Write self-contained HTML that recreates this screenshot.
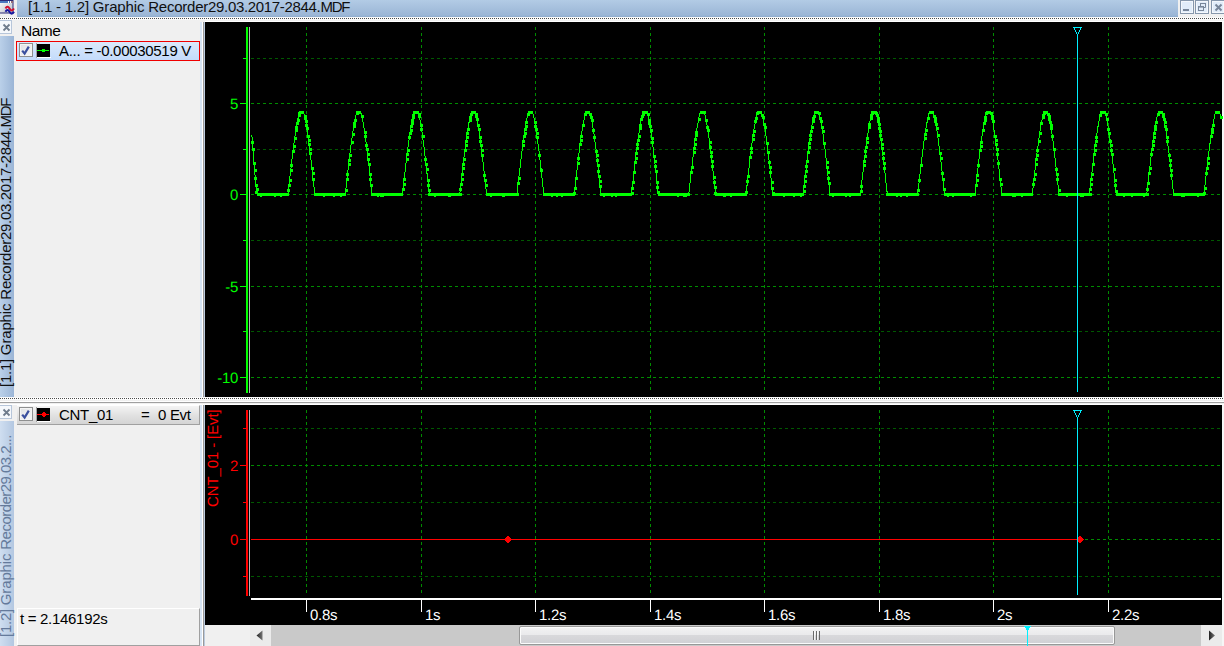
<!DOCTYPE html>
<html><head><meta charset="utf-8"><title>Graphic Recorder</title>
<style>
html,body{margin:0;padding:0}
body{width:1224px;height:646px;overflow:hidden;position:relative;background:#f0f0f0;font-family:"Liberation Sans",Arial,sans-serif;font-size:15px;color:#000}
.a{position:absolute}
.dots{height:1px;background:repeating-linear-gradient(90deg,#4a4a4a 0 1px,#fff 1px 2px)}
.vt{position:absolute;white-space:pre;transform-origin:0 0;transform:rotate(-90deg);font-size:15px;line-height:14px;height:14px}
.row{position:absolute;white-space:nowrap;letter-spacing:-0.3px;line-height:18px}
.cb{position:absolute;width:12px;height:12px;border:1px solid #8e8f8f;background:linear-gradient(135deg,#dfe1e4,#f8f8f8);box-shadow:inset 0 0 0 1px #f4f4f4}
.xb{position:absolute;left:0;width:11px;height:12px;border:1px solid #b7c6da;border-left:none;background:#f5f8fc}
</style></head><body>
<!-- title bar -->
<div class="a" style="left:17px;top:0;width:1161px;height:17px;background:linear-gradient(#b2cbe5,#9bb6d6 90%,#8fabcc)"></div>
<div class="a" style="left:28px;top:-2px;font-size:15px;line-height:18px;white-space:pre;letter-spacing:0px;color:#101010" id="title"><span style="letter-spacing:-0.23px">[1.1 - 1.2] </span><span style="letter-spacing:-0.15px">Graphic </span><span style="letter-spacing:-0.25px">Recorder</span><span style="letter-spacing:-0.32px">29.03.2017-2844.</span><span style="letter-spacing:-1.27px">MDF</span></div>
<!-- app icon -->
<svg class="a" style="left:0;top:0" width="15" height="15" viewBox="0 0 15 15">
<defs><linearGradient id="ig" x1="0" y1="0" x2="1" y2="1"><stop offset="0" stop-color="#fff"/><stop offset="1" stop-color="#b8bcc4"/></linearGradient></defs>
<rect x="-1" y="0.5" width="14" height="12.5" fill="url(#ig)" stroke="#2b2b78" stroke-width="1"/>
<rect x="0" y="1" width="13" height="2" fill="#4a78c0"/>
<rect x="8" y="1" width="1" height="2" fill="#fff"/><rect x="10" y="1" width="1" height="2" fill="#fff"/><rect x="11.5" y="1" width="1" height="2" fill="#e06030"/>
<path d="M5.500 8.500c1.300-2.500 2.600-2.500 4 0s3 2.500 4.500 0" fill="none" stroke="#d01030" stroke-width="2"/>
<path d="M5.500 11.800c1.300-2.500 2.600-2.500 4 0s3 2.500 4.500 0" fill="none" stroke="#1818a0" stroke-width="2"/>
</svg>
<!-- window buttons -->
<svg class="a" style="left:1178px;top:0" width="46" height="17" viewBox="0 0 46 17">
<g fill="#e1ecf9" stroke="#8697ac" stroke-width="1">
<rect x="2.5" y="0.5" width="13" height="13"/><rect x="17.5" y="0.5" width="13" height="13"/><rect x="33.5" y="0.5" width="13" height="13"/></g>
<g fill="none" stroke="#fff" stroke-width="1" opacity=".6"><rect x="3.5" y="1.5" width="11" height="11"/><rect x="18.5" y="1.5" width="11" height="11"/><rect x="34.5" y="1.5" width="11" height="11"/></g>
<rect x="5" y="9" width="6" height="2" fill="#78869a"/>
<g fill="none" stroke="#78869a" stroke-width="1"><path d="M22.5 6V3.5h5v4H26" /><rect x="20.5" y="6.500" width="5" height="4"/></g>
<rect x="22" y="3" width="6" height="1" fill="#78869a"/><rect x="20" y="6" width="6" height="1.6" fill="#78869a"/>
<path d="M37.500 4.500l6 6M43.500 4.500l-6 6" stroke="#78869a" stroke-width="2" fill="none"/>
</svg>
<!-- dotted separators -->
<div class="a" style="left:0;top:17px;width:1224px;height:3px;background:#fafafa"></div>
<div class="a dots" style="left:0;top:18px;width:1224px"></div>
<div class="a" style="left:0;top:397px;width:1224px;height:3px;background:#fafafa"></div>
<div class="a dots" style="left:0;top:398px;width:1224px"></div>
<div class="a" style="left:0;top:401px;width:1224px;height:1px;background:#fff"></div>
<div class="a" style="left:0;top:402px;width:1224px;height:1px;background:#a0a0a0"></div>
<div class="a" style="left:0;top:404px;width:1224px;height:1px;background:#fff"></div>
<!-- left tab strips -->
<div class="a" style="left:0;top:36px;width:14px;height:361px;background:linear-gradient(90deg,#bad0e9,#9bb5d6)"></div>
<div class="a" style="left:0;top:421px;width:14px;height:225px;background:linear-gradient(90deg,#cfdef0,#b3c7e1)"></div>
<div class="vt" id="vt1" style="left:-1px;top:387px;color:#101010"><span style="letter-spacing:-0.25px">[1.1] </span><span style="letter-spacing:-0.15px">Graphic </span><span style="letter-spacing:-0.25px">Recorder</span><span style="letter-spacing:-0.32px">29.03.2017-2844.</span><span style="letter-spacing:-1.27px">MDF</span></div>
<div class="vt" id="vt2" style="left:-1px;top:637px;color:#647a9b"><span style="letter-spacing:-0.25px">[1.2] </span><span style="letter-spacing:-0.16px">Graphic </span><span style="letter-spacing:-0.52px">Recorder</span><span style="letter-spacing:-0.56px">29.03.2...</span></div>
<div class="xb" style="top:20px"></div>
<div class="xb" style="top:405px"></div>
<svg class="a" style="left:0;top:20px" width="13" height="14" viewBox="0 0 13 14"><path d="M3.500 4.500l6 6M9.500 4.500l-6 6" stroke="#6f7c8c" stroke-width="1.8" fill="none"/></svg>
<svg class="a" style="left:0;top:405px" width="13" height="14" viewBox="0 0 13 14"><path d="M3.500 4.500l6 6M9.500 4.500l-6 6" stroke="#6f7c8c" stroke-width="1.8" fill="none"/></svg>
<!-- legend top -->
<div class="a" id="name" style="left:21px;top:21.700px;line-height:18px;font-size:15.5px;letter-spacing:-0.5px">Name</div>
<div class="a" style="left:16px;top:41px;width:182px;height:18px;border:1px solid #f00000;background:linear-gradient(#dbe9fb,#c3dbfb)"></div>
<div class="cb" style="left:19px;top:43px"></div>
<svg class="a" style="left:19px;top:43px" width="14" height="14" viewBox="0 0 14 14"><path d="M3.200 7.600L5.600 10.500L9.800 3.600" fill="none" stroke="#3a4f9e" stroke-width="2.200"/></svg>
<svg class="a" style="left:36px;top:43px" width="15" height="15" viewBox="0 0 15 15" shape-rendering="crispEdges"><rect x="0" y="0" width="1" height="15" fill="#a0a0a0"/><rect x="1" y="1" width="13" height="13" fill="#000"/><rect x="1" y="14" width="14" height="1" fill="#fff"/><rect x="1" y="7" width="12" height="1" fill="#00ff00"/><rect x="6" y="6" width="3" height="3" fill="#00ff00"/></svg>
<div class="row" id="r1" style="left:59px;top:42px">A... = -0.00030519 V</div>
<!-- legend bottom -->
<div class="a" style="left:17px;top:405px;width:182px;height:19px;border-right:1px solid #a0a0a0;border-bottom:1px solid #a0a0a0;border-top:1px solid #fff;box-sizing:border-box;width:183px;height:20px;background:linear-gradient(#f4f4f4,#e2e2e2 50%,#d4d4d4)"></div>
<div class="cb" style="left:19px;top:407px"></div>
<svg class="a" style="left:19px;top:407px" width="14" height="14" viewBox="0 0 14 14"><path d="M3.200 7.600L5.600 10.500L9.800 3.600" fill="none" stroke="#3a4f9e" stroke-width="2.200"/></svg>
<svg class="a" style="left:36px;top:407px" width="15" height="15" viewBox="0 0 15 15" shape-rendering="crispEdges"><rect x="0" y="0" width="1" height="15" fill="#a0a0a0"/><rect x="1" y="1" width="13" height="13" fill="#000"/><rect x="1" y="14" width="14" height="1" fill="#fff"/><rect x="1" y="7" width="12" height="1" fill="#ff0000"/><path d="M7 5h2v1h1v1h1v1h-1v1h-1v1h-2v-1h-1v-1h-1v-1h1v-1h1z" fill="#ff0000"/></svg>
<div class="row" id="r2a" style="left:59px;top:406px">CNT_01</div>
<div class="row" id="r2b" style="left:141px;top:406px">=</div>
<div class="row" id="r2c" style="left:158px;top:406px">0 Evt</div>
<!-- time box -->
<div class="a" style="left:17px;top:608px;width:183px;height:38px;box-sizing:border-box;border-top:1px solid #fff;border-left:1px solid #fff;border-right:1px solid #a0a0a0;border-bottom:1px solid #a0a0a0"></div>
<div class="row" id="tb" style="left:20px;top:610px">t = 2.146192s</div>
<!-- vertical splitter -->
<div class="a" style="left:200px;top:22px;width:5px;height:375px;background:linear-gradient(90deg,#d6e4f4 0 2px,#fff 2px 3px,#9a9a9a 3px 4px,#bccbde 4px 5px)"></div>
<div class="a" style="left:200px;top:405px;width:5px;height:241px;background:linear-gradient(90deg,#d6e4f4 0 2px,#fff 2px 3px,#9a9a9a 3px 4px,#bccbde 4px 5px)"></div>
<div class="a" style="left:205px;top:21px;width:1019px;height:1px;background:#fff"></div>
<div class="a" style="left:1222px;top:22px;width:2px;height:375px;background:#f6f6f6"></div>
<div class="a" style="left:1222px;top:405px;width:2px;height:241px;background:#f6f6f6"></div>
<svg width="1224" height="646" viewBox="0 0 1224 646" style="position:absolute;left:0;top:0" shape-rendering="crispEdges">
<rect x="205" y="22" width="1017" height="375" fill="#000"/>
<rect x="205" y="405" width="1017" height="220" fill="#000"/>
<g stroke="#008c00" stroke-width="1" stroke-dasharray="3 3" fill="none">
<line x1="306.5" y1="27" x2="306.5" y2="393"/>
<line x1="306.5" y1="410" x2="306.5" y2="596"/>
<line x1="421.5" y1="27" x2="421.5" y2="393"/>
<line x1="421.5" y1="410" x2="421.5" y2="596"/>
<line x1="535.5" y1="27" x2="535.5" y2="393"/>
<line x1="535.5" y1="410" x2="535.5" y2="596"/>
<line x1="650.5" y1="27" x2="650.5" y2="393"/>
<line x1="650.5" y1="410" x2="650.5" y2="596"/>
<line x1="764.5" y1="27" x2="764.5" y2="393"/>
<line x1="764.5" y1="410" x2="764.5" y2="596"/>
<line x1="879.5" y1="27" x2="879.5" y2="393"/>
<line x1="879.5" y1="410" x2="879.5" y2="596"/>
<line x1="993.5" y1="27" x2="993.5" y2="393"/>
<line x1="993.5" y1="410" x2="993.5" y2="596"/>
<line x1="1108.5" y1="27" x2="1108.5" y2="393"/>
<line x1="1108.5" y1="410" x2="1108.5" y2="596"/>
<line x1="251" y1="103.5" x2="1221" y2="103.5"/>
<line x1="251" y1="194.5" x2="1221" y2="194.5"/>
<line x1="251" y1="286.5" x2="1221" y2="286.5"/>
<line x1="251" y1="377.5" x2="1221" y2="377.5"/>
<line x1="251" y1="465.5" x2="1221" y2="465.5"/>
<line x1="251" y1="539.5" x2="1221" y2="539.5"/>
</g>
<g stroke="#005800" stroke-width="1" stroke-dasharray="3 3" fill="none">
<line x1="251" y1="58.5" x2="1221" y2="58.5"/>
<line x1="251" y1="149.5" x2="1221" y2="149.5"/>
<line x1="251" y1="240.5" x2="1221" y2="240.5"/>
<line x1="251" y1="331.5" x2="1221" y2="331.5"/>
<line x1="251" y1="428.5" x2="1221" y2="428.5"/>
<line x1="251" y1="502.5" x2="1221" y2="502.5"/>
<line x1="251" y1="576.5" x2="1221" y2="576.5"/>
</g>
<rect x="246" y="27" width="2" height="366" fill="#00ff00"/>
<rect x="249" y="27" width="1" height="366" fill="#b4b4b4"/>
<rect x="240" y="103" width="6" height="1" fill="#00ff00"/>
<rect x="240" y="194" width="6" height="1" fill="#00ff00"/>
<rect x="240" y="286" width="6" height="1" fill="#00ff00"/>
<rect x="240" y="377" width="6" height="1" fill="#00ff00"/>
<rect x="243" y="58" width="3" height="1" fill="#00ff00"/>
<rect x="243" y="149" width="3" height="1" fill="#00ff00"/>
<rect x="243" y="240" width="3" height="1" fill="#00ff00"/>
<rect x="243" y="331" width="3" height="1" fill="#00ff00"/>
<rect x="246" y="410" width="2" height="186" fill="#ff0000"/>
<rect x="249" y="410" width="1" height="186" fill="#b4b4b4"/>
<rect x="240" y="465" width="6" height="1" fill="#ff0000"/>
<rect x="240" y="539" width="6" height="1" fill="#ff0000"/>
<rect x="243" y="428" width="3" height="1" fill="#ff0000"/>
<rect x="243" y="502" width="3" height="1" fill="#ff0000"/>
<rect x="243" y="576" width="3" height="1" fill="#ff0000"/>
<g font-family="'Liberation Sans',Arial,sans-serif" font-size="15" letter-spacing="-0.3" text-rendering="geometricPrecision">
<g fill="#00ff00" text-anchor="end">
<text x="238" y="108.6">5</text>
<text x="238" y="199.6">0</text>
<text x="238" y="291.6">-5</text>
<text x="238" y="382.6">-10</text>
</g>
<g fill="#ff0000" text-anchor="end">
<text x="238" y="470.6">2</text>
<text x="238" y="544.6">0</text>
</g>
<text fill="#ff0000" letter-spacing="-0.12" transform="translate(218 507) rotate(-90)">CNT_01 - [Evt]</text>
<rect x="251" y="598" width="970" height="2" fill="#fff"/>
<rect x="306" y="600" width="1" height="12" fill="#fff"/>
<text fill="#fff" x="310" y="620">0.8s</text>
<rect x="421" y="600" width="1" height="12" fill="#fff"/>
<text fill="#fff" x="425" y="620">1s</text>
<rect x="535" y="600" width="1" height="12" fill="#fff"/>
<text fill="#fff" x="539" y="620">1.2s</text>
<rect x="650" y="600" width="1" height="12" fill="#fff"/>
<text fill="#fff" x="654" y="620">1.4s</text>
<rect x="764" y="600" width="1" height="12" fill="#fff"/>
<text fill="#fff" x="768" y="620">1.6s</text>
<rect x="879" y="600" width="1" height="12" fill="#fff"/>
<text fill="#fff" x="883" y="620">1.8s</text>
<rect x="993" y="600" width="1" height="12" fill="#fff"/>
<text fill="#fff" x="997" y="620">2s</text>
<rect x="1108" y="600" width="1" height="12" fill="#fff"/>
<text fill="#fff" x="1112" y="620">2.2s</text>
</g>
<path d="M251.8 134.8 L252.4 141.9 L252.9 149.0 L253.5 156.2 L254.1 163.3 L254.7 170.4 L255.2 177.6 L255.8 184.7 L256.4 191.8 L257.0 188.9 L257.5 194.3 L258.1 194.5 L258.7 194.5 L259.2 194.5 L259.8 194.5 L260.4 194.5 L261.0 194.5 L261.5 194.5 L262.1 194.5 L262.7 194.5 L263.3 194.5 L263.8 194.5 L264.4 194.5 L265.0 194.5 L265.6 194.5 L266.1 194.5 L266.7 194.5 L267.3 194.5 L267.8 194.5 L268.4 194.5 L269.0 194.5 L269.6 194.5 L270.1 194.5 L270.7 194.5 L271.3 194.5 L271.9 194.5 L272.4 194.5 L273.0 194.5 L273.6 194.5 L274.1 194.5 L274.7 194.5 L275.3 194.5 L275.9 194.5 L276.4 194.5 L277.0 194.5 L277.6 194.5 L278.2 194.5 L278.7 194.5 L279.3 194.5 L279.9 194.5 L280.4 194.5 L281.0 194.5 L281.6 194.5 L282.2 194.5 L282.7 194.5 L283.3 194.5 L283.9 194.5 L284.5 194.5 L285.0 194.5 L285.6 194.5 L286.2 194.5 L286.8 194.5 L287.3 194.5 L287.9 194.5 L288.5 190.2 L289.0 185.1 L289.6 179.9 L290.2 174.8 L290.8 169.8 L291.3 164.9 L291.9 160.0 L292.5 155.3 L293.1 150.7 L293.6 146.2 L294.2 142.0 L294.8 137.9 L295.3 133.9 L295.9 130.2 L296.5 126.7 L297.1 123.4 L297.6 120.4 L298.2 117.6 L298.8 115.1 L299.4 112.8 L299.9 112.3 L300.5 112.3 L301.1 112.3 L301.7 112.3 L302.2 112.3 L302.8 112.3 L303.4 112.3 L303.9 113.2 L304.5 115.7 L305.1 118.3 L305.7 121.3 L306.2 124.5 L306.8 128.0 L307.4 131.7 L308.0 135.7 L308.5 139.8 L309.1 144.2 L309.7 148.7 L310.2 153.4 L310.8 158.2 L311.4 163.2 L312.0 168.3 L312.5 173.5 L313.1 178.7 L313.7 184.1 L314.3 189.4 L314.8 194.5 L315.4 194.5 L316.0 194.5 L316.5 194.5 L317.1 194.5 L317.7 194.5 L318.3 194.5 L318.8 194.5 L319.4 194.5 L320.0 194.5 L320.6 194.5 L321.1 194.5 L321.7 194.5 L322.3 194.5 L322.9 194.5 L323.4 194.5 L324.0 194.5 L324.6 194.5 L325.1 194.5 L325.7 194.5 L326.3 194.5 L326.9 194.5 L327.4 194.5 L328.0 194.5 L328.6 194.5 L329.2 194.5 L329.7 194.5 L330.3 194.5 L330.9 194.5 L331.4 194.5 L332.0 194.5 L332.6 194.5 L333.2 194.5 L333.7 194.5 L334.3 194.5 L334.9 194.5 L335.5 194.5 L336.0 194.5 L336.6 194.5 L337.2 194.5 L337.7 194.5 L338.3 194.5 L338.9 194.5 L339.5 194.5 L340.0 194.5 L340.6 194.5 L341.2 194.5 L341.8 194.5 L342.3 194.5 L342.9 194.5 L343.5 194.5 L344.1 194.5 L344.6 194.5 L345.2 194.5 L345.8 189.8 L346.3 184.6 L346.9 179.5 L347.5 174.4 L348.1 169.4 L348.6 164.4 L349.2 159.6 L349.8 154.9 L350.4 150.3 L350.9 145.9 L351.5 141.6 L352.1 137.5 L352.6 133.6 L353.2 129.9 L353.8 126.4 L354.4 123.2 L354.9 120.2 L355.5 117.4 L356.1 114.9 L356.7 112.6 L357.2 112.3 L357.8 112.3 L358.4 112.3 L359.0 112.3 L359.5 112.3 L360.1 112.3 L360.7 112.3 L361.2 113.4 L361.8 115.9 L362.4 118.6 L363.0 121.6 L363.5 124.8 L364.1 128.3 L364.7 132.0 L365.3 136.0 L365.8 140.2 L366.4 144.5 L367.0 149.1 L367.5 153.8 L368.1 158.7 L368.7 163.6 L369.3 168.7 L369.8 173.9 L370.4 179.2 L371.0 184.5 L371.6 189.9 L372.1 194.5 L372.7 194.5 L373.3 194.5 L373.8 194.5 L374.4 194.5 L375.0 194.5 L375.6 194.5 L376.1 194.5 L376.7 194.5 L377.3 194.5 L377.9 194.5 L378.4 194.5 L379.0 194.5 L379.6 194.5 L380.2 194.5 L380.7 194.5 L381.3 194.5 L381.9 194.5 L382.4 194.5 L383.0 194.5 L383.6 194.5 L384.2 194.5 L384.7 194.5 L385.3 194.5 L385.9 194.5 L386.5 194.5 L387.0 194.5 L387.6 194.5 L388.2 194.5 L388.7 194.5 L389.3 194.5 L389.9 194.5 L390.5 194.5 L391.0 194.5 L391.6 194.5 L392.2 194.5 L392.8 194.5 L393.3 194.5 L393.9 194.5 L394.5 194.5 L395.0 194.5 L395.6 194.5 L396.2 194.5 L396.8 194.5 L397.3 194.5 L397.9 194.5 L398.5 194.5 L399.1 194.5 L399.6 194.5 L400.2 194.5 L400.8 194.5 L401.4 194.5 L401.9 194.5 L402.5 194.5 L403.1 189.3 L403.6 184.2 L404.2 179.0 L404.8 173.9 L405.4 168.9 L405.9 164.0 L406.5 159.2 L407.1 154.5 L407.7 149.9 L408.2 145.5 L408.8 141.2 L409.4 137.2 L409.9 133.3 L410.5 129.6 L411.1 126.1 L411.7 122.9 L412.2 119.9 L412.8 117.2 L413.4 114.7 L414.0 112.5 L414.5 112.3 L415.1 112.3 L415.7 112.3 L416.3 112.3 L416.8 112.3 L417.4 112.3 L418.0 112.3 L418.5 113.6 L419.1 116.1 L419.7 118.8 L420.3 121.8 L420.8 125.1 L421.4 128.6 L422.0 132.4 L422.6 136.4 L423.1 140.6 L423.7 144.9 L424.3 149.5 L424.8 154.2 L425.4 159.1 L426.0 164.1 L426.6 169.2 L427.1 174.4 L427.7 179.7 L428.3 185.0 L428.9 190.3 L429.4 194.5 L430.0 194.5 L430.6 194.5 L431.1 194.5 L431.7 194.5 L432.3 194.5 L432.9 194.5 L433.4 194.5 L434.0 194.5 L434.6 194.5 L435.2 194.5 L435.7 194.5 L436.3 194.5 L436.9 194.5 L437.5 194.5 L438.0 194.5 L438.6 194.5 L439.2 194.5 L439.7 194.5 L440.3 194.5 L440.9 194.5 L441.5 194.5 L442.0 194.5 L442.6 194.5 L443.2 194.5 L443.8 194.5 L444.3 194.5 L444.9 194.5 L445.5 194.5 L446.0 194.5 L446.6 194.5 L447.2 194.5 L447.8 194.5 L448.3 194.5 L448.9 194.5 L449.5 194.5 L450.1 194.5 L450.6 194.5 L451.2 194.5 L451.8 194.5 L452.3 194.5 L452.9 194.5 L453.5 194.5 L454.1 194.5 L454.6 194.5 L455.2 194.5 L455.8 194.5 L456.4 194.5 L456.9 194.5 L457.5 194.5 L458.1 194.5 L458.7 194.5 L459.2 194.5 L459.8 194.1 L460.4 188.9 L460.9 183.7 L461.5 178.6 L462.1 173.5 L462.7 168.5 L463.2 163.6 L463.8 158.8 L464.4 154.1 L465.0 149.5 L465.5 145.1 L466.1 140.9 L466.7 136.8 L467.2 132.9 L467.8 129.3 L468.4 125.8 L469.0 122.6 L469.5 119.7 L470.1 116.9 L470.7 114.5 L471.3 112.3 L471.8 112.3 L472.4 112.3 L473.0 112.3 L473.6 112.3 L474.1 112.3 L474.7 112.3 L475.3 112.3 L475.8 113.8 L476.4 116.3 L477.0 119.1 L477.6 122.1 L478.1 125.4 L478.7 128.9 L479.3 132.7 L479.9 136.7 L480.4 140.9 L481.0 145.3 L481.6 149.9 L482.1 154.6 L482.7 159.5 L483.3 164.5 L483.9 169.6 L484.4 174.9 L485.0 180.1 L485.6 185.5 L486.2 190.8 L486.7 194.5 L487.3 194.5 L487.9 194.5 L488.4 194.5 L489.0 194.5 L489.6 194.5 L490.2 194.5 L490.7 194.5 L491.3 194.5 L491.9 194.5 L492.5 194.5 L493.0 194.5 L493.6 194.5 L494.2 194.5 L494.8 194.5 L495.3 194.5 L495.9 194.5 L496.5 194.5 L497.0 194.5 L497.6 194.5 L498.2 194.5 L498.8 194.5 L499.3 194.5 L499.9 194.5 L500.5 194.5 L501.1 194.5 L501.6 194.5 L502.2 194.5 L502.8 194.5 L503.3 194.5 L503.9 194.5 L504.5 194.5 L505.1 194.5 L505.6 194.5 L506.2 194.5 L506.8 194.5 L507.4 194.5 L507.9 194.5 L508.5 194.5 L509.1 194.5 L509.6 194.5 L510.2 194.5 L510.8 194.5 L511.4 194.5 L511.9 194.5 L512.5 194.5 L513.1 194.5 L513.7 194.5 L514.2 194.5 L514.8 194.5 L515.4 194.5 L516.0 194.5 L516.5 194.5 L517.1 193.6 L517.7 188.4 L518.2 183.3 L518.8 178.1 L519.4 173.1 L520.0 168.1 L520.5 163.2 L521.1 158.4 L521.7 153.7 L522.3 149.1 L522.8 144.7 L523.4 140.5 L524.0 136.5 L524.5 132.6 L525.1 129.0 L525.7 125.5 L526.3 122.4 L526.8 119.4 L527.4 116.7 L528.0 114.3 L528.6 112.3 L529.1 112.3 L529.7 112.3 L530.3 112.3 L530.9 112.3 L531.4 112.3 L532.0 112.3 L532.6 112.3 L533.1 114.1 L533.7 116.6 L534.3 119.3 L534.9 122.4 L535.4 125.7 L536.0 129.3 L536.6 133.1 L537.2 137.1 L537.7 141.3 L538.3 145.7 L538.9 150.3 L539.4 155.1 L540.0 160.0 L540.6 165.0 L541.2 170.1 L541.7 175.3 L542.3 180.6 L542.9 185.9 L543.5 191.3 L544.0 194.5 L544.6 194.5 L545.2 194.5 L545.7 194.5 L546.3 194.5 L546.9 194.5 L547.5 194.5 L548.0 194.5 L548.6 194.5 L549.2 194.5 L549.8 194.5 L550.3 194.5 L550.9 194.5 L551.5 194.5 L552.1 194.5 L552.6 194.5 L553.2 194.5 L553.8 194.5 L554.3 194.5 L554.9 194.5 L555.5 194.5 L556.1 194.5 L556.6 194.5 L557.2 194.5 L557.8 194.5 L558.4 194.5 L558.9 194.5 L559.5 194.5 L560.1 194.5 L560.6 194.5 L561.2 194.5 L561.8 194.5 L562.4 194.5 L562.9 194.5 L563.5 194.5 L564.1 194.5 L564.7 194.5 L565.2 194.5 L565.8 194.5 L566.4 194.5 L566.9 194.5 L567.5 194.5 L568.1 194.5 L568.7 194.5 L569.2 194.5 L569.8 194.5 L570.4 194.5 L571.0 194.5 L571.5 194.5 L572.1 194.5 L572.7 194.5 L573.3 194.5 L573.8 194.5 L574.4 193.2 L575.0 188.0 L575.5 182.8 L576.1 177.7 L576.7 172.6 L577.3 167.6 L577.8 162.7 L578.4 157.9 L579.0 153.3 L579.6 148.7 L580.1 144.4 L580.7 140.1 L581.3 136.1 L581.8 132.3 L582.4 128.7 L583.0 125.3 L583.6 122.1 L584.1 119.2 L584.7 116.5 L585.3 114.1 L585.9 112.3 L586.4 112.3 L587.0 112.3 L587.6 112.3 L588.2 112.3 L588.7 112.3 L589.3 112.3 L589.9 112.3 L590.4 114.3 L591.0 116.8 L591.6 119.6 L592.2 122.7 L592.7 126.0 L593.3 129.6 L593.9 133.4 L594.5 137.4 L595.0 141.7 L595.6 146.1 L596.2 150.7 L596.7 155.5 L597.3 160.4 L597.9 165.4 L598.5 170.5 L599.0 175.8 L599.6 181.1 L600.2 186.4 L600.8 191.8 L601.3 194.5 L601.9 194.5 L602.5 194.5 L603.0 194.5 L603.6 194.5 L604.2 194.5 L604.8 194.5 L605.3 194.5 L605.9 194.5 L606.5 194.5 L607.1 194.5 L607.6 194.5 L608.2 194.5 L608.8 194.5 L609.4 194.5 L609.9 194.5 L610.5 194.5 L611.1 194.5 L611.6 194.5 L612.2 194.5 L612.8 194.5 L613.4 194.5 L613.9 194.5 L614.5 194.5 L615.1 194.5 L615.7 194.5 L616.2 194.5 L616.8 194.5 L617.4 194.5 L617.9 194.5 L618.5 194.5 L619.1 194.5 L619.7 194.5 L620.2 194.5 L620.8 194.5 L621.4 194.5 L622.0 194.5 L622.5 194.5 L623.1 194.5 L623.7 194.5 L624.2 194.5 L624.8 194.5 L625.4 194.5 L626.0 194.5 L626.5 194.5 L627.1 194.5 L627.7 194.5 L628.3 194.5 L628.8 194.5 L629.4 194.5 L630.0 194.5 L630.6 194.5 L631.1 194.5 L631.7 192.7 L632.3 187.5 L632.8 182.4 L633.4 177.2 L634.0 172.2 L634.6 167.2 L635.1 162.3 L635.7 157.5 L636.3 152.9 L636.9 148.3 L637.4 144.0 L638.0 139.8 L638.6 135.8 L639.1 132.0 L639.7 128.4 L640.3 125.0 L640.9 121.8 L641.4 118.9 L642.0 116.3 L642.6 113.9 L643.2 112.3 L643.7 112.3 L644.3 112.3 L644.9 112.3 L645.5 112.3 L646.0 112.3 L646.6 112.3 L647.2 112.3 L647.7 114.5 L648.3 117.0 L648.9 119.9 L649.5 123.0 L650.0 126.3 L650.6 129.9 L651.2 133.7 L651.8 137.8 L652.3 142.1 L652.9 146.5 L653.5 151.1 L654.0 155.9 L654.6 160.8 L655.2 165.9 L655.8 171.0 L656.3 176.2 L656.9 181.5 L657.5 186.9 L658.1 192.2 L658.6 194.5 L659.2 194.5 L659.8 194.5 L660.3 194.5 L660.9 194.5 L661.5 194.5 L662.1 194.5 L662.6 194.5 L663.2 194.5 L663.8 194.5 L664.4 194.5 L664.9 194.5 L665.5 194.5 L666.1 194.5 L666.7 194.5 L667.2 194.5 L667.8 194.5 L668.4 194.5 L668.9 194.5 L669.5 194.5 L670.1 194.5 L670.7 194.5 L671.2 194.5 L671.8 194.5 L672.4 194.5 L673.0 194.5 L673.5 194.5 L674.1 194.5 L674.7 194.5 L675.2 194.5 L675.8 194.5 L676.4 194.5 L677.0 194.5 L677.5 194.5 L678.1 194.5 L678.7 194.5 L679.3 194.5 L679.8 194.5 L680.4 194.5 L681.0 194.5 L681.5 194.5 L682.1 194.5 L682.7 194.5 L683.3 194.5 L683.8 194.5 L684.4 194.5 L685.0 194.5 L685.6 194.5 L686.1 194.5 L686.7 194.5 L687.3 194.5 L687.9 194.5 L688.4 194.5 L689.0 192.2 L689.6 187.1 L690.1 181.9 L690.7 176.8 L691.3 171.7 L691.9 166.8 L692.4 161.9 L693.0 157.1 L693.6 152.5 L694.2 148.0 L694.7 143.6 L695.3 139.4 L695.9 135.4 L696.4 131.6 L697.0 128.0 L697.6 124.7 L698.2 121.6 L698.7 118.7 L699.3 116.0 L699.9 113.7 L700.5 112.3 L701.0 112.3 L701.6 112.3 L702.2 112.3 L702.8 112.3 L703.3 112.3 L703.9 112.3 L704.5 112.4 L705.0 114.7 L705.6 117.3 L706.2 120.1 L706.8 123.2 L707.3 126.6 L707.9 130.2 L708.5 134.1 L709.1 138.2 L709.6 142.4 L710.2 146.9 L710.8 151.5 L711.3 156.3 L711.9 161.3 L712.5 166.3 L713.1 171.5 L713.6 176.7 L714.2 182.0 L714.8 187.3 L715.4 192.7 L715.9 194.5 L716.5 194.5 L717.1 194.5 L717.6 194.5 L718.2 194.5 L718.8 194.5 L719.4 194.5 L719.9 194.5 L720.5 194.5 L721.1 194.5 L721.7 194.5 L722.2 194.5 L722.8 194.5 L723.4 194.5 L724.0 194.5 L724.5 194.5 L725.1 194.5 L725.7 194.5 L726.2 194.5 L726.8 194.5 L727.4 194.5 L728.0 194.5 L728.5 194.5 L729.1 194.5 L729.7 194.5 L730.3 194.5 L730.8 194.5 L731.4 194.5 L732.0 194.5 L732.5 194.5 L733.1 194.5 L733.7 194.5 L734.3 194.5 L734.8 194.5 L735.4 194.5 L736.0 194.5 L736.6 194.5 L737.1 194.5 L737.7 194.5 L738.3 194.5 L738.8 194.5 L739.4 194.5 L740.0 194.5 L740.6 194.5 L741.1 194.5 L741.7 194.5 L742.3 194.5 L742.9 194.5 L743.4 194.5 L744.0 194.5 L744.6 194.5 L745.2 194.5 L745.7 194.5 L746.3 191.8 L746.9 186.6 L747.4 181.5 L748.0 176.4 L748.6 171.3 L749.2 166.3 L749.7 161.5 L750.3 156.7 L750.9 152.1 L751.5 147.6 L752.0 143.2 L752.6 139.1 L753.2 135.1 L753.7 131.3 L754.3 127.7 L754.9 124.4 L755.5 121.3 L756.0 118.4 L756.6 115.8 L757.2 113.5 L757.8 112.3 L758.3 112.3 L758.9 112.3 L759.5 112.3 L760.1 112.3 L760.6 112.3 L761.2 112.3 L761.8 112.6 L762.3 114.9 L762.9 117.5 L763.5 120.4 L764.1 123.5 L764.6 126.9 L765.2 130.6 L765.8 134.4 L766.4 138.5 L766.9 142.8 L767.5 147.3 L768.1 152.0 L768.6 156.8 L769.2 161.7 L769.8 166.8 L770.4 171.9 L770.9 177.1 L771.5 182.4 L772.1 187.8 L772.7 193.2 L773.2 194.5 L773.8 194.5 L774.4 194.5 L774.9 194.5 L775.5 194.5 L776.1 194.5 L776.7 194.5 L777.2 194.5 L777.8 194.5 L778.4 194.5 L779.0 194.5 L779.5 194.5 L780.1 194.5 L780.7 194.5 L781.3 194.5 L781.8 194.5 L782.4 194.5 L783.0 194.5 L783.5 194.5 L784.1 194.5 L784.7 194.5 L785.3 194.5 L785.8 194.5 L786.4 194.5 L787.0 194.5 L787.6 194.5 L788.1 194.5 L788.7 194.5 L789.3 194.5 L789.8 194.5 L790.4 194.5 L791.0 194.5 L791.6 194.5 L792.1 194.5 L792.7 194.5 L793.3 194.5 L793.9 194.5 L794.4 194.5 L795.0 194.5 L795.6 194.5 L796.1 194.5 L796.7 194.5 L797.3 194.5 L797.9 194.5 L798.4 194.5 L799.0 194.5 L799.6 194.5 L800.2 194.5 L800.7 194.5 L801.3 194.5 L801.9 194.5 L802.5 194.5 L803.0 194.5 L803.6 191.3 L804.2 186.2 L804.7 181.0 L805.3 175.9 L805.9 170.9 L806.5 165.9 L807.0 161.0 L807.6 156.3 L808.2 151.7 L808.8 147.2 L809.3 142.9 L809.9 138.7 L810.5 134.8 L811.0 131.0 L811.6 127.4 L812.2 124.1 L812.8 121.0 L813.3 118.2 L813.9 115.6 L814.5 113.3 L815.1 112.3 L815.6 112.3 L816.2 112.3 L816.8 112.3 L817.4 112.3 L817.9 112.3 L818.5 112.3 L819.1 112.8 L819.6 115.1 L820.2 117.7 L820.8 120.6 L821.4 123.8 L821.9 127.2 L822.5 130.9 L823.1 134.8 L823.7 138.9 L824.2 143.2 L824.8 147.7 L825.4 152.4 L825.9 157.2 L826.5 162.1 L827.1 167.2 L827.7 172.4 L828.2 177.6 L828.8 182.9 L829.4 188.3 L830.0 193.6 L830.5 194.5 L831.1 194.5 L831.7 194.5 L832.2 194.5 L832.8 194.5 L833.4 194.5 L834.0 194.5 L834.5 194.5 L835.1 194.5 L835.7 194.5 L836.3 194.5 L836.8 194.5 L837.4 194.5 L838.0 194.5 L838.6 194.5 L839.1 194.5 L839.7 194.5 L840.3 194.5 L840.8 194.5 L841.4 194.5 L842.0 194.5 L842.6 194.5 L843.1 194.5 L843.7 194.5 L844.3 194.5 L844.9 194.5 L845.4 194.5 L846.0 194.5 L846.6 194.5 L847.1 194.5 L847.7 194.5 L848.3 194.5 L848.9 194.5 L849.4 194.5 L850.0 194.5 L850.6 194.5 L851.2 194.5 L851.7 194.5 L852.3 194.5 L852.9 194.5 L853.4 194.5 L854.0 194.5 L854.6 194.5 L855.2 194.5 L855.7 194.5 L856.3 194.5 L856.9 194.5 L857.5 194.5 L858.0 194.5 L858.6 194.5 L859.2 194.5 L859.8 194.5 L860.3 194.5 L860.9 190.9 L861.5 185.7 L862.0 180.6 L862.6 175.5 L863.2 170.4 L863.8 165.5 L864.3 160.6 L864.9 155.9 L865.5 151.3 L866.1 146.8 L866.6 142.5 L867.2 138.4 L867.8 134.4 L868.3 130.7 L868.9 127.1 L869.5 123.8 L870.1 120.8 L870.6 118.0 L871.2 115.4 L871.8 113.1 L872.4 112.3 L872.9 112.3 L873.5 112.3 L874.1 112.3 L874.7 112.3 L875.2 112.3 L875.8 112.3 L876.4 113.0 L876.9 115.3 L877.5 118.0 L878.1 120.9 L878.7 124.1 L879.2 127.5 L879.8 131.2 L880.4 135.1 L881.0 139.3 L881.5 143.6 L882.1 148.1 L882.7 152.8 L883.2 157.6 L883.8 162.6 L884.4 167.6 L885.0 172.8 L885.5 178.1 L886.1 183.4 L886.7 188.7 L887.3 194.1 L887.8 194.5 L888.4 194.5 L889.0 194.5 L889.5 194.5 L890.1 194.5 L890.7 194.5 L891.3 194.5 L891.8 194.5 L892.4 194.5 L893.0 194.5 L893.6 194.5 L894.1 194.5 L894.7 194.5 L895.3 194.5 L895.9 194.5 L896.4 194.5 L897.0 194.5 L897.6 194.5 L898.1 194.5 L898.7 194.5 L899.3 194.5 L899.9 194.5 L900.4 194.5 L901.0 194.5 L901.6 194.5 L902.2 194.5 L902.7 194.5 L903.3 194.5 L903.9 194.5 L904.4 194.5 L905.0 194.5 L905.6 194.5 L906.2 194.5 L906.7 194.5 L907.3 194.5 L907.9 194.5 L908.5 194.5 L909.0 194.5 L909.6 194.5 L910.2 194.5 L910.7 194.5 L911.3 194.5 L911.9 194.5 L912.5 194.5 L913.0 194.5 L913.6 194.5 L914.2 194.5 L914.8 194.5 L915.3 194.5 L915.9 194.5 L916.5 194.5 L917.1 194.5 L917.6 194.5 L918.2 190.4 L918.8 185.3 L919.3 180.1 L919.9 175.0 L920.5 170.0 L921.1 165.1 L921.6 160.2 L922.2 155.5 L922.8 150.9 L923.4 146.4 L923.9 142.1 L924.5 138.0 L925.1 134.1 L925.6 130.4 L926.2 126.9 L926.8 123.6 L927.4 120.5 L927.9 117.7 L928.5 115.2 L929.1 112.9 L929.7 112.3 L930.2 112.3 L930.8 112.3 L931.4 112.3 L932.0 112.3 L932.5 112.3 L933.1 112.3 L933.7 113.2 L934.2 115.5 L934.8 118.2 L935.4 121.2 L936.0 124.4 L936.5 127.9 L937.1 131.6 L937.7 135.5 L938.3 139.6 L938.8 144.0 L939.4 148.5 L940.0 153.2 L940.5 158.0 L941.1 163.0 L941.7 168.1 L942.3 173.3 L942.8 178.5 L943.4 183.8 L944.0 189.2 L944.6 194.5 L945.1 194.5 L945.7 194.5 L946.3 194.5 L946.8 194.5 L947.4 194.5 L948.0 194.5 L948.6 194.5 L949.1 194.5 L949.7 194.5 L950.3 194.5 L950.9 194.5 L951.4 194.5 L952.0 194.5 L952.6 194.5 L953.2 194.5 L953.7 194.5 L954.3 194.5 L954.9 194.5 L955.4 194.5 L956.0 194.5 L956.6 194.5 L957.2 194.5 L957.7 194.5 L958.3 194.5 L958.9 194.5 L959.5 194.5 L960.0 194.5 L960.6 194.5 L961.2 194.5 L961.7 194.5 L962.3 194.5 L962.9 194.5 L963.5 194.5 L964.0 194.5 L964.6 194.5 L965.2 194.5 L965.8 194.5 L966.3 194.5 L966.9 194.5 L967.5 194.5 L968.0 194.5 L968.6 194.5 L969.2 194.5 L969.8 194.5 L970.3 194.5 L970.9 194.5 L971.5 194.5 L972.1 194.5 L972.6 194.5 L973.2 194.5 L973.8 194.5 L974.4 194.5 L974.9 194.5 L975.5 190.0 L976.1 184.8 L976.6 179.7 L977.2 174.6 L977.8 169.6 L978.4 164.6 L978.9 159.8 L979.5 155.1 L980.1 150.5 L980.7 146.0 L981.2 141.8 L981.8 137.7 L982.4 133.8 L982.9 130.0 L983.5 126.6 L984.1 123.3 L984.7 120.3 L985.2 117.5 L985.8 115.0 L986.4 112.7 L987.0 112.3 L987.5 112.3 L988.1 112.3 L988.7 112.3 L989.3 112.3 L989.8 112.3 L990.4 112.3 L991.0 113.4 L991.5 115.8 L992.1 118.5 L992.7 121.4 L993.3 124.7 L993.8 128.2 L994.4 131.9 L995.0 135.8 L995.6 140.0 L996.1 144.4 L996.7 148.9 L997.3 153.6 L997.8 158.5 L998.4 163.4 L999.0 168.5 L999.6 173.7 L1000.1 179.0 L1000.7 184.3 L1001.3 189.7 L1001.9 194.5 L1002.4 194.5 L1003.0 194.5 L1003.6 194.5 L1004.1 194.5 L1004.7 194.5 L1005.3 194.5 L1005.9 194.5 L1006.4 194.5 L1007.0 194.5 L1007.6 194.5 L1008.2 194.5 L1008.7 194.5 L1009.3 194.5 L1009.9 194.5 L1010.5 194.5 L1011.0 194.5 L1011.6 194.5 L1012.2 194.5 L1012.7 194.5 L1013.3 194.5 L1013.9 194.5 L1014.5 194.5 L1015.0 194.5 L1015.6 194.5 L1016.2 194.5 L1016.8 194.5 L1017.3 194.5 L1017.9 194.5 L1018.5 194.5 L1019.0 194.5 L1019.6 194.5 L1020.2 194.5 L1020.8 194.5 L1021.3 194.5 L1021.9 194.5 L1022.5 194.5 L1023.1 194.5 L1023.6 194.5 L1024.2 194.5 L1024.8 194.5 L1025.3 194.5 L1025.9 194.5 L1026.5 194.5 L1027.1 194.5 L1027.6 194.5 L1028.2 194.5 L1028.8 194.5 L1029.4 194.5 L1029.9 194.5 L1030.5 194.5 L1031.1 194.5 L1031.7 194.5 L1032.2 194.5 L1032.8 189.5 L1033.4 184.4 L1033.9 179.2 L1034.5 174.1 L1035.1 169.1 L1035.7 164.2 L1036.2 159.4 L1036.8 154.7 L1037.4 150.1 L1038.0 145.7 L1038.5 141.4 L1039.1 137.3 L1039.7 133.4 L1040.2 129.7 L1040.8 126.3 L1041.4 123.0 L1042.0 120.0 L1042.5 117.3 L1043.1 114.8 L1043.7 112.5 L1044.3 112.3 L1044.8 112.3 L1045.4 112.3 L1046.0 112.3 L1046.6 112.3 L1047.1 112.3 L1047.7 112.3 L1048.3 113.6 L1048.8 116.0 L1049.4 118.7 L1050.0 121.7 L1050.6 125.0 L1051.1 128.5 L1051.7 132.2 L1052.3 136.2 L1052.9 140.4 L1053.4 144.8 L1054.0 149.3 L1054.6 154.0 L1055.1 158.9 L1055.7 163.9 L1056.3 169.0 L1056.9 174.2 L1057.4 179.5 L1058.0 184.8 L1058.6 190.1 L1059.2 194.5 L1059.7 194.5 L1060.3 194.5 L1060.9 194.5 L1061.4 194.5 L1062.0 194.5 L1062.6 194.5 L1063.2 194.5 L1063.7 194.5 L1064.3 194.5 L1064.9 194.5 L1065.5 194.5 L1066.0 194.5 L1066.6 194.5 L1067.2 194.5 L1067.8 194.5 L1068.3 194.5 L1068.9 194.5 L1069.5 194.5 L1070.0 194.5 L1070.6 194.5 L1071.2 194.5 L1071.8 194.5 L1072.3 194.5 L1072.9 194.5 L1073.5 194.5 L1074.1 194.5 L1074.6 194.5 L1075.2 194.5 L1075.8 194.5 L1076.3 194.5 L1076.9 194.5 L1077.5 194.5 L1078.1 194.5 L1078.6 194.5 L1079.2 194.5 L1079.8 194.5 L1080.4 194.5 L1080.9 194.5 L1081.5 194.5 L1082.1 194.5 L1082.6 194.5 L1083.2 194.5 L1083.8 194.5 L1084.4 194.5 L1084.9 194.5 L1085.5 194.5 L1086.1 194.5 L1086.7 194.5 L1087.2 194.5 L1087.8 194.5 L1088.4 194.5 L1089.0 194.5 L1089.5 194.3 L1090.1 189.1 L1090.7 183.9 L1091.2 178.8 L1091.8 173.7 L1092.4 168.7 L1093.0 163.8 L1093.5 159.0 L1094.1 154.3 L1094.7 149.7 L1095.3 145.3 L1095.8 141.0 L1096.4 137.0 L1097.0 133.1 L1097.5 129.4 L1098.1 126.0 L1098.7 122.7 L1099.3 119.8 L1099.8 117.0 L1100.4 114.6 L1101.0 112.4 L1101.6 112.3 L1102.1 112.3 L1102.7 112.3 L1103.3 112.3 L1103.9 112.3 L1104.4 112.3 L1105.0 112.3 L1105.6 113.8 L1106.1 116.2 L1106.7 119.0 L1107.3 122.0 L1107.9 125.3 L1108.4 128.8 L1109.0 132.6 L1109.6 136.6 L1110.2 140.8 L1110.7 145.1 L1111.3 149.7 L1111.9 154.4 L1112.4 159.3 L1113.0 164.3 L1113.6 169.4 L1114.2 174.6 L1114.7 179.9 L1115.3 185.2 L1115.9 190.6 L1116.5 194.5 L1117.0 194.5 L1117.6 194.5 L1118.2 194.5 L1118.7 194.5 L1119.3 194.5 L1119.9 194.5 L1120.5 194.5 L1121.0 194.5 L1121.6 194.5 L1122.2 194.5 L1122.8 194.5 L1123.3 194.5 L1123.9 194.5 L1124.5 194.5 L1125.1 194.5 L1125.6 194.5 L1126.2 194.5 L1126.8 194.5 L1127.3 194.5 L1127.9 194.5 L1128.5 194.5 L1129.1 194.5 L1129.6 194.5 L1130.2 194.5 L1130.8 194.5 L1131.4 194.5 L1131.9 194.5 L1132.5 194.5 L1133.1 194.5 L1133.6 194.5 L1134.2 194.5 L1134.8 194.5 L1135.4 194.5 L1135.9 194.5 L1136.5 194.5 L1137.1 194.5 L1137.7 194.5 L1138.2 194.5 L1138.8 194.5 L1139.4 194.5 L1139.9 194.5 L1140.5 194.5 L1141.1 194.5 L1141.7 194.5 L1142.2 194.5 L1142.8 194.5 L1143.4 194.5 L1144.0 194.5 L1144.5 194.5 L1145.1 194.5 L1145.7 194.5 L1146.3 194.5 L1146.8 193.8 L1147.4 188.6 L1148.0 183.5 L1148.5 178.3 L1149.1 173.3 L1149.7 168.3 L1150.3 163.4 L1150.8 158.5 L1151.4 153.9 L1152.0 149.3 L1152.6 144.9 L1153.1 140.7 L1153.7 136.6 L1154.3 132.8 L1154.8 129.1 L1155.4 125.7 L1156.0 122.5 L1156.6 119.5 L1157.1 116.8 L1157.7 114.4 L1158.3 112.3 L1158.9 112.3 L1159.4 112.3 L1160.0 112.3 L1160.6 112.3 L1161.2 112.3 L1161.7 112.3 L1162.3 112.3 L1162.9 114.0 L1163.4 116.4 L1164.0 119.2 L1164.6 122.3 L1165.2 125.6 L1165.7 129.1 L1166.3 132.9 L1166.9 136.9 L1167.5 141.1 L1168.0 145.5 L1168.6 150.1 L1169.2 154.9 L1169.7 159.8 L1170.3 164.8 L1170.9 169.9 L1171.5 175.1 L1172.0 180.4 L1172.6 185.7 L1173.2 191.1 L1173.8 194.5 L1174.3 194.5 L1174.9 194.5 L1175.5 194.5 L1176.0 194.5 L1176.6 194.5 L1177.2 194.5 L1177.8 194.5 L1178.3 194.5 L1178.9 194.5 L1179.5 194.5 L1180.1 194.5 L1180.6 194.5 L1181.2 194.5 L1181.8 194.5 L1182.4 194.5 L1182.9 194.5 L1183.5 194.5 L1184.1 194.5 L1184.6 194.5 L1185.2 194.5 L1185.8 194.5 L1186.4 194.5 L1186.9 194.5 L1187.5 194.5 L1188.1 194.5 L1188.7 194.5 L1189.2 194.5 L1189.8 194.5 L1190.4 194.5 L1190.9 194.5 L1191.5 194.5 L1192.1 194.5 L1192.7 194.5 L1193.2 194.5 L1193.8 194.5 L1194.4 194.5 L1195.0 194.5 L1195.5 194.5 L1196.1 194.5 L1196.7 194.5 L1197.3 194.5 L1197.8 194.5 L1198.4 194.5 L1199.0 194.5 L1199.5 194.5 L1200.1 194.5 L1200.7 194.5 L1201.3 194.5 L1201.8 194.5 L1202.4 194.5 L1203.0 194.5 L1203.6 194.5 L1204.1 193.4 L1204.7 188.2 L1205.3 183.0 L1205.8 177.9 L1206.4 172.8 L1207.0 167.8 L1207.6 162.9 L1208.1 158.1 L1208.7 153.5 L1209.3 148.9 L1209.9 144.5 L1210.4 140.3 L1211.0 136.3 L1211.6 132.4 L1212.1 128.8 L1212.7 125.4 L1213.3 122.2 L1213.9 119.3 L1214.4 116.6 L1215.0 114.2 L1215.6 112.3 L1216.2 112.3 L1216.7 112.3 L1217.3 112.3 L1217.9 112.3 L1218.5 112.3 L1219.0 112.3 L1219.6 112.3 L1220.2 114.2 L1220.7 116.7" fill="none" stroke="#00ff00" stroke-width="1" shape-rendering="crispEdges"/>
<path d="M257 193H289 v3H257zM299 111H304 v3H299zM314 193H346 v3H314zM356 111H361 v3H356zM371 193H403 v3H371zM413 111H419 v3H413zM428 193H461 v3H428zM471 111H476 v3H471zM486 193H518 v3H486zM528 111H533 v3H528zM543 193H575 v3H543zM585 111H590 v3H585zM600 193H632 v3H600zM642 111H648 v3H642zM658 193H690 v3H658zM700 111H705 v3H700zM715 193H747 v3H715zM757 111H762 v3H757zM772 193H804 v3H772zM814 111H819 v3H814zM829 193H861 v3H829zM871 111H877 v3H871zM886 193H919 v3H886zM929 111H934 v3H929zM944 193H976 v3H944zM986 111H991 v3H986zM1001 193H1033 v3H1001zM1043 111H1048 v3H1043zM1058 193H1090 v3H1058zM1100 111H1106 v3H1100zM1116 193H1148 v3H1116zM1158 111H1163 v3H1158zM1173 193H1205 v3H1173zM1215 111H1220 v3H1215zM251 141h3v3h-3zM252 148h3v3h-3zM253 162h3v3h-3zM254 169h3v3h-3zM254 177h3v3h-3zM255 184h3v3h-3zM255 191h3v3h-3zM256 188h3v3h-3zM257 193h3v3h-3zM287 189h3v3h-3zM288 184h3v3h-3zM289 179h3v3h-3zM290 169h3v3h-3zM290 164h3v3h-3zM292 150h3v3h-3zM293 145h3v3h-3zM294 137h3v3h-3zM295 129h3v3h-3zM295 126h3v3h-3zM296 122h3v3h-3zM297 119h3v3h-3zM298 114h3v3h-3zM298 112h3v3h-3zM304 115h3v3h-3zM304 117h3v3h-3zM305 120h3v3h-3zM305 124h3v3h-3zM306 127h3v3h-3zM307 135h3v3h-3zM308 139h3v3h-3zM308 143h3v3h-3zM309 148h3v3h-3zM309 152h3v3h-3zM311 167h3v3h-3zM312 172h3v3h-3zM312 178h3v3h-3zM345 189h3v3h-3zM346 178h3v3h-3zM346 173h3v3h-3zM348 163h3v3h-3zM348 159h3v3h-3zM349 154h3v3h-3zM351 141h3v3h-3zM352 133h3v3h-3zM353 125h3v3h-3zM353 122h3v3h-3zM354 119h3v3h-3zM356 112h3v3h-3zM361 115h3v3h-3zM364 131h3v3h-3zM364 135h3v3h-3zM365 144h3v3h-3zM366 148h3v3h-3zM367 153h3v3h-3zM367 158h3v3h-3zM368 163h3v3h-3zM369 173h3v3h-3zM369 178h3v3h-3zM370 184h3v3h-3zM402 188h3v3h-3zM403 183h3v3h-3zM403 178h3v3h-3zM406 158h3v3h-3zM406 153h3v3h-3zM407 149h3v3h-3zM408 136h3v3h-3zM409 132h3v3h-3zM410 129h3v3h-3zM410 125h3v3h-3zM411 122h3v3h-3zM411 119h3v3h-3zM412 116h3v3h-3zM412 114h3v3h-3zM413 111h3v3h-3zM418 113h3v3h-3zM418 115h3v3h-3zM420 124h3v3h-3zM420 128h3v3h-3zM422 135h3v3h-3zM424 158h3v3h-3zM425 163h3v3h-3zM426 168h3v3h-3zM427 179h3v3h-3zM427 184h3v3h-3zM428 189h3v3h-3zM459 193h3v3h-3zM459 188h3v3h-3zM460 183h3v3h-3zM461 178h3v3h-3zM461 173h3v3h-3zM462 167h3v3h-3zM462 163h3v3h-3zM463 158h3v3h-3zM464 149h3v3h-3zM465 144h3v3h-3zM465 140h3v3h-3zM466 136h3v3h-3zM466 132h3v3h-3zM467 128h3v3h-3zM469 119h3v3h-3zM469 116h3v3h-3zM470 113h3v3h-3zM475 113h3v3h-3zM475 115h3v3h-3zM476 118h3v3h-3zM477 124h3v3h-3zM478 128h3v3h-3zM479 136h3v3h-3zM479 140h3v3h-3zM480 144h3v3h-3zM481 149h3v3h-3zM481 154h3v3h-3zM483 174h3v3h-3zM484 179h3v3h-3zM485 184h3v3h-3zM516 193h3v3h-3zM517 182h3v3h-3zM518 177h3v3h-3zM522 144h3v3h-3zM522 140h3v3h-3zM523 135h3v3h-3zM524 132h3v3h-3zM524 128h3v3h-3zM525 125h3v3h-3zM525 121h3v3h-3zM527 113h3v3h-3zM534 121h3v3h-3zM534 125h3v3h-3zM535 128h3v3h-3zM536 132h3v3h-3zM536 136h3v3h-3zM538 154h3v3h-3zM540 169h3v3h-3zM573 192h3v3h-3zM574 187h3v3h-3zM575 177h3v3h-3zM577 162h3v3h-3zM577 157h3v3h-3zM579 143h3v3h-3zM580 139h3v3h-3zM580 135h3v3h-3zM582 124h3v3h-3zM584 113h3v3h-3zM589 113h3v3h-3zM590 116h3v3h-3zM591 119h3v3h-3zM592 129h3v3h-3zM593 136h3v3h-3zM595 150h3v3h-3zM596 154h3v3h-3zM596 159h3v3h-3zM597 164h3v3h-3zM597 170h3v3h-3zM598 175h3v3h-3zM599 180h3v3h-3zM599 185h3v3h-3zM631 192h3v3h-3zM631 187h3v3h-3zM632 181h3v3h-3zM633 171h3v3h-3zM634 161h3v3h-3zM635 157h3v3h-3zM635 152h3v3h-3zM636 147h3v3h-3zM636 143h3v3h-3zM637 139h3v3h-3zM638 135h3v3h-3zM639 127h3v3h-3zM639 124h3v3h-3zM640 118h3v3h-3zM641 115h3v3h-3zM642 113h3v3h-3zM647 113h3v3h-3zM648 119h3v3h-3zM648 122h3v3h-3zM649 125h3v3h-3zM650 129h3v3h-3zM651 137h3v3h-3zM651 141h3v3h-3zM653 155h3v3h-3zM654 160h3v3h-3zM654 165h3v3h-3zM655 170h3v3h-3zM656 181h3v3h-3zM656 186h3v3h-3zM657 191h3v3h-3zM690 171h3v3h-3zM691 166h3v3h-3zM693 151h3v3h-3zM693 147h3v3h-3zM694 143h3v3h-3zM694 138h3v3h-3zM695 134h3v3h-3zM695 131h3v3h-3zM698 118h3v3h-3zM703 111h3v3h-3zM705 119h3v3h-3zM706 126h3v3h-3zM707 129h3v3h-3zM709 141h3v3h-3zM709 146h3v3h-3zM710 151h3v3h-3zM710 155h3v3h-3zM711 160h3v3h-3zM711 165h3v3h-3zM713 176h3v3h-3zM713 181h3v3h-3zM714 186h3v3h-3zM714 192h3v3h-3zM745 191h3v3h-3zM746 180h3v3h-3zM747 175h3v3h-3zM749 156h3v3h-3zM750 151h3v3h-3zM750 147h3v3h-3zM752 138h3v3h-3zM752 134h3v3h-3zM753 130h3v3h-3zM754 120h3v3h-3zM755 117h3v3h-3zM756 112h3v3h-3zM761 114h3v3h-3zM762 116h3v3h-3zM763 123h3v3h-3zM764 126h3v3h-3zM766 142h3v3h-3zM767 151h3v3h-3zM768 161h3v3h-3zM769 166h3v3h-3zM769 171h3v3h-3zM771 181h3v3h-3zM771 187h3v3h-3zM772 192h3v3h-3zM803 190h3v3h-3zM803 185h3v3h-3zM804 180h3v3h-3zM804 175h3v3h-3zM805 170h3v3h-3zM805 165h3v3h-3zM806 160h3v3h-3zM807 151h3v3h-3zM808 146h3v3h-3zM808 142h3v3h-3zM809 138h3v3h-3zM809 134h3v3h-3zM810 130h3v3h-3zM811 126h3v3h-3zM812 120h3v3h-3zM812 117h3v3h-3zM813 115h3v3h-3zM818 112h3v3h-3zM819 117h3v3h-3zM820 120h3v3h-3zM821 126h3v3h-3zM822 130h3v3h-3zM823 142h3v3h-3zM826 161h3v3h-3zM826 166h3v3h-3zM827 171h3v3h-3zM827 177h3v3h-3zM828 182h3v3h-3zM829 193h3v3h-3zM860 190h3v3h-3zM860 185h3v3h-3zM863 164h3v3h-3zM863 160h3v3h-3zM864 155h3v3h-3zM864 150h3v3h-3zM865 146h3v3h-3zM866 141h3v3h-3zM866 137h3v3h-3zM868 126h3v3h-3zM868 123h3v3h-3zM870 117h3v3h-3zM870 114h3v3h-3zM871 112h3v3h-3zM875 112h3v3h-3zM876 114h3v3h-3zM877 117h3v3h-3zM877 120h3v3h-3zM878 123h3v3h-3zM878 127h3v3h-3zM879 130h3v3h-3zM879 134h3v3h-3zM880 138h3v3h-3zM881 143h3v3h-3zM881 147h3v3h-3zM882 152h3v3h-3zM882 157h3v3h-3zM883 162h3v3h-3zM883 167h3v3h-3zM886 193h3v3h-3zM917 189h3v3h-3zM918 179h3v3h-3zM920 164h3v3h-3zM924 137h3v3h-3zM924 133h3v3h-3zM925 129h3v3h-3zM927 117h3v3h-3zM933 115h3v3h-3zM934 117h3v3h-3zM934 120h3v3h-3zM935 123h3v3h-3zM936 127h3v3h-3zM937 134h3v3h-3zM939 152h3v3h-3zM940 157h3v3h-3zM941 172h3v3h-3zM942 178h3v3h-3zM943 188h3v3h-3zM975 184h3v3h-3zM976 179h3v3h-3zM976 174h3v3h-3zM977 164h3v3h-3zM979 149h3v3h-3zM980 145h3v3h-3zM980 141h3v3h-3zM982 129h3v3h-3zM983 122h3v3h-3zM984 119h3v3h-3zM984 116h3v3h-3zM985 112h3v3h-3zM990 112h3v3h-3zM991 115h3v3h-3zM991 117h3v3h-3zM992 120h3v3h-3zM994 135h3v3h-3zM995 139h3v3h-3zM995 143h3v3h-3zM996 148h3v3h-3zM996 153h3v3h-3zM997 162h3v3h-3zM999 178h3v3h-3zM1000 183h3v3h-3zM1032 183h3v3h-3zM1033 178h3v3h-3zM1034 173h3v3h-3zM1035 163h3v3h-3zM1035 158h3v3h-3zM1036 154h3v3h-3zM1036 149h3v3h-3zM1038 140h3v3h-3zM1039 132h3v3h-3zM1040 122h3v3h-3zM1042 116h3v3h-3zM1042 114h3v3h-3zM1043 112h3v3h-3zM1047 113h3v3h-3zM1048 115h3v3h-3zM1048 118h3v3h-3zM1049 121h3v3h-3zM1050 124h3v3h-3zM1050 127h3v3h-3zM1051 135h3v3h-3zM1053 148h3v3h-3zM1055 168h3v3h-3zM1056 173h3v3h-3zM1056 178h3v3h-3zM1058 189h3v3h-3zM1089 193h3v3h-3zM1089 188h3v3h-3zM1090 183h3v3h-3zM1090 178h3v3h-3zM1091 173h3v3h-3zM1092 163h3v3h-3zM1093 153h3v3h-3zM1094 149h3v3h-3zM1094 144h3v3h-3zM1095 140h3v3h-3zM1095 136h3v3h-3zM1099 114h3v3h-3zM1105 113h3v3h-3zM1106 118h3v3h-3zM1107 128h3v3h-3zM1108 132h3v3h-3zM1109 140h3v3h-3zM1110 144h3v3h-3zM1110 149h3v3h-3zM1111 153h3v3h-3zM1113 168h3v3h-3zM1114 179h3v3h-3zM1114 184h3v3h-3zM1115 190h3v3h-3zM1146 193h3v3h-3zM1146 188h3v3h-3zM1147 182h3v3h-3zM1148 172h3v3h-3zM1149 167h3v3h-3zM1150 153h3v3h-3zM1151 148h3v3h-3zM1152 144h3v3h-3zM1152 140h3v3h-3zM1153 136h3v3h-3zM1153 132h3v3h-3zM1154 128h3v3h-3zM1154 125h3v3h-3zM1155 121h3v3h-3zM1157 113h3v3h-3zM1162 113h3v3h-3zM1162 115h3v3h-3zM1163 118h3v3h-3zM1164 121h3v3h-3zM1164 125h3v3h-3zM1165 128h3v3h-3zM1166 136h3v3h-3zM1166 140h3v3h-3zM1168 154h3v3h-3zM1169 159h3v3h-3zM1169 164h3v3h-3zM1170 169h3v3h-3zM1170 174h3v3h-3zM1203 192h3v3h-3zM1204 187h3v3h-3zM1205 172h3v3h-3zM1206 167h3v3h-3zM1207 162h3v3h-3zM1207 157h3v3h-3zM1210 135h3v3h-3zM1211 131h3v3h-3zM1211 128h3v3h-3zM1212 124h3v3h-3zM1220 116h3v3h-3zM274 196h2v1h-2zM260 196h2v1h-2zM280 196h2v1h-2zM323 196h2v1h-2zM340 196h2v1h-2zM333 196h2v1h-2zM382 196h2v1h-2zM377 196h2v1h-2zM380 196h2v1h-2zM448 196h2v1h-2zM449 196h2v1h-2zM434 196h2v1h-2zM490 196h2v1h-2zM502 196h2v1h-2zM503 196h2v1h-2zM556 196h2v1h-2zM551 196h2v1h-2zM561 196h2v1h-2zM603 196h2v1h-2zM611 196h2v1h-2zM615 196h2v1h-2zM685 196h2v1h-2zM677 196h2v1h-2zM683 196h2v1h-2zM730 196h2v1h-2zM723 196h2v1h-2zM724 196h2v1h-2zM800 196h2v1h-2zM793 196h2v1h-2zM783 196h2v1h-2zM832 196h2v1h-2zM845 196h2v1h-2zM849 196h2v1h-2zM900 196h2v1h-2zM896 196h2v1h-2zM906 196h2v1h-2zM970 196h2v1h-2zM952 196h2v1h-2zM947 196h2v1h-2zM1012 196h2v1h-2zM1014 196h2v1h-2zM1021 196h2v1h-2zM1066 196h2v1h-2zM1082 196h2v1h-2zM1080 196h2v1h-2zM1131 196h2v1h-2zM1123 196h2v1h-2zM1143 196h2v1h-2zM1183 196h2v1h-2zM1197 196h2v1h-2zM1181 196h2v1h-2z" fill="#00ff00"/>
<rect x="251" y="539" width="830" height="1" fill="#ff0000"/>
<path d="M507 536h2v1h1v1h1v1h1v1h-1v1h-1v1h-1v1h-2v-1h-1v-1h-1v-1h-1v-1h1v-1h1v-1h1z" fill="#ff0000"/>
<path d="M1079 536h2v1h1v1h1v1h1v1h-1v1h-1v1h-1v1h-2v-1h-1v-1h-1v-1h-1v-1h1v-1h1v-1h1z" fill="#ff0000"/>
<g fill="#00f0ff"><rect x="1073" y="27" width="9" height="1"/><rect x="1074" y="28" width="1" height="1"/><rect x="1080" y="28" width="1" height="1"/><rect x="1074" y="29" width="1" height="1"/><rect x="1080" y="29" width="1" height="1"/><rect x="1075" y="30" width="1" height="1"/><rect x="1079" y="30" width="1" height="1"/><rect x="1075" y="31" width="1" height="1"/><rect x="1079" y="31" width="1" height="1"/><rect x="1076" y="32" width="1" height="1"/><rect x="1078" y="32" width="1" height="1"/><rect x="1076" y="33" width="1" height="1"/><rect x="1078" y="33" width="1" height="1"/><rect x="1077" y="34" width="1" height="358"/></g>
<g fill="#00f0ff"><rect x="1073" y="410" width="9" height="1"/><rect x="1074" y="411" width="1" height="1"/><rect x="1080" y="411" width="1" height="1"/><rect x="1074" y="412" width="1" height="1"/><rect x="1080" y="412" width="1" height="1"/><rect x="1075" y="413" width="1" height="1"/><rect x="1079" y="413" width="1" height="1"/><rect x="1075" y="414" width="1" height="1"/><rect x="1079" y="414" width="1" height="1"/><rect x="1076" y="415" width="1" height="1"/><rect x="1078" y="415" width="1" height="1"/><rect x="1076" y="416" width="1" height="1"/><rect x="1078" y="416" width="1" height="1"/><rect x="1077" y="417" width="1" height="178"/></g>
</svg>
<!-- scrollbar -->
<div class="a" style="left:205px;top:625px;width:1017px;height:21px;background:#f0f0f0"></div>
<div class="a" style="left:250px;top:625px;width:972px;height:21px;background:#c9c9c9"></div>
<div class="a" style="left:250px;top:625px;width:21px;height:21px;background:#ebebeb"></div>
<div class="a" style="left:1201px;top:625px;width:21px;height:21px;background:#ebebeb"></div>
<svg class="a" style="left:250px;top:625px" width="21" height="21" viewBox="0 0 21 21"><defs><linearGradient id="ag" x1="0" y1="0" x2="1" y2="0"><stop offset="0" stop-color="#222"/><stop offset="1" stop-color="#777"/></linearGradient></defs><path d="M6.500 10.500l6-5v10z" fill="url(#ag)"/></svg>
<svg class="a" style="left:1201px;top:625px" width="21" height="21" viewBox="0 0 21 21"><path d="M14 10.500l-6-5v10z" fill="url(#ag)"/></svg>
<div class="a" style="left:519px;top:626px;width:596px;height:19px;box-sizing:border-box;border:1px solid #989898;border-radius:2px;background:linear-gradient(#f2f2f3,#eaeaec 45%,#d8d8db 50%,#d0d0d4);box-shadow:inset 0 0 0 1px #fbfbfb"></div>
<div class="a" style="left:813px;top:631px;width:7px;height:9px;background:repeating-linear-gradient(90deg,#6a6a6a 0 1px,rgba(255,255,255,.7) 1px 2px,transparent 2px 3px)"></div>
<svg class="a" style="left:1023px;top:625px" width="10" height="21" viewBox="0 0 10 21" shape-rendering="crispEdges"><path d="M1 1h7l-3.500 5z" fill="#00f0ff"/><rect x="4" y="1" width="1" height="20" fill="#00f0ff"/></svg>
</body></html>
